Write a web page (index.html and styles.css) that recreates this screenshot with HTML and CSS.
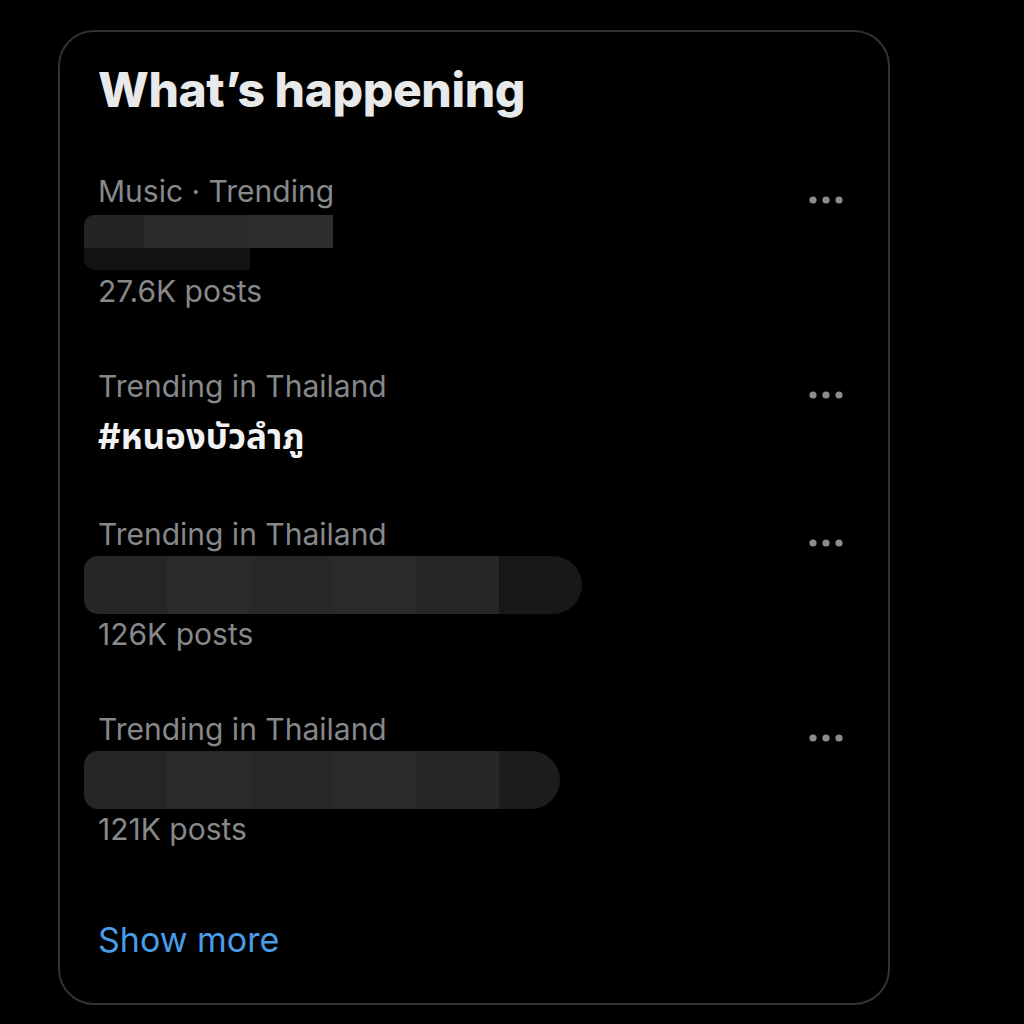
FILE: index.html
```html
<!DOCTYPE html>
<html lang="en">
<head>
  <meta charset="UTF-8">
  <meta name="viewport" content="width=device-width, initial-scale=1.0">
  <title>What's happening</title>
  <link rel="stylesheet" href="styles.css">
</head>
<body>
  <div class="card">
    <h2 class="card-title">What’s happening</h2>

    <div class="trend">
      <div class="trend-body">
        <div class="trend-meta">Music · Trending</div>
        <div class="redacted redacted-short">
          <span class="r-top"></span>
          <span class="r-bottom"></span>
        </div>
        <div class="trend-count">27.6K posts</div>
      </div>
      <svg class="more" viewBox="0 0 36 12" width="36" height="12">
        <circle cx="5" cy="6" r="3.6"/><circle cx="18" cy="6" r="3.6"/><circle cx="31" cy="6" r="3.6"/>
      </svg>
    </div>

    <div class="trend">
      <div class="trend-body">
        <div class="trend-meta">Trending in Thailand</div>
        <div class="trend-name">#หนองบัวลำภู</div>
      </div>
      <svg class="more" viewBox="0 0 36 12" width="36" height="12">
        <circle cx="5" cy="6" r="3.6"/><circle cx="18" cy="6" r="3.6"/><circle cx="31" cy="6" r="3.6"/>
      </svg>
    </div>

    <div class="trend">
      <div class="trend-body">
        <div class="trend-meta">Trending in Thailand</div>
        <div class="redacted redacted-long">
          <span></span><span></span><span></span><span></span><span></span><span class="r-end"></span>
        </div>
        <div class="trend-count">126K posts</div>
      </div>
      <svg class="more" viewBox="0 0 36 12" width="36" height="12">
        <circle cx="5" cy="6" r="3.6"/><circle cx="18" cy="6" r="3.6"/><circle cx="31" cy="6" r="3.6"/>
      </svg>
    </div>

    <div class="trend">
      <div class="trend-body">
        <div class="trend-meta">Trending in Thailand</div>
        <div class="redacted redacted-mid">
          <span></span><span></span><span></span><span></span><span></span><span class="r-end"></span>
        </div>
        <div class="trend-count">121K posts</div>
      </div>
      <svg class="more" viewBox="0 0 36 12" width="36" height="12">
        <circle cx="5" cy="6" r="3.6"/><circle cx="18" cy="6" r="3.6"/><circle cx="31" cy="6" r="3.6"/>
      </svg>
    </div>

    <a class="show-more" href="#">Show more</a>
  </div>
</body>
</html>
```

FILE: styles.css
```css
body {
  margin: 0;
  background-color: #000;
  font-family: Inter, "Noto Sans", "Noto Sans Thai", sans-serif;
  color: #e7e9ea;
}
.card {
  box-sizing: border-box;
  width: 832px;
  margin: 30px 0 0 58px;
  border: 2px solid #2f3336;
  border-radius: 36px;
  display: flex;
  flex-direction: column;
}
.card-title {
  margin: 0;
  padding: 32px 38px 27px;
  font-size: 48px;
  line-height: 52px;
  font-weight: 800;
  letter-spacing: -0.4px;
  color: #e7e9ea;
}
.trend {
  display: flex;
  justify-content: space-between;
  align-items: flex-start;
  padding: 24px 44px 23px 38px;
}
.trend-body {
  display: flex;
  flex-direction: column;
}
.trend-meta,
.trend-count {
  font-size: 30px;
  line-height: 48px;
  color: #86888a;
}
.trend-name {
  font-size: 35px;
  line-height: 53px;
  font-weight: 700;
  color: #f2f2f2;
}
.more {
  fill: #8a8c8e;
  margin-top: 27px;
}
.redacted {
  display: flex;
}
.redacted-short {
  flex-direction: column;
  height: 55px;
  margin: 0 0 -3px -14px;
}
.redacted-short .r-top {
  width: 249px;
  height: 33px;
  background: linear-gradient(90deg, #242424 0 24%, #2a2a2a 24% 66%, #2e2e2e 66% 100%);
  border-radius: 10px 0 0 0;
}
.redacted-short .r-bottom {
  width: 166px;
  height: 22px;
  background-color: #121212;
  border-radius: 0 0 0 10px;
}
.redacted-long,
.redacted-mid {
  height: 58px;
  margin: -2px 0 -4px -14px;
}
.redacted-long span,
.redacted-mid span {
  width: 83px;
  height: 100%;
}
.redacted-long span:nth-child(1),
.redacted-mid span:nth-child(1) {
  background-color: #262626;
  border-radius: 14px 0 0 14px;
}
.redacted-long span:nth-child(2),
.redacted-mid span:nth-child(2) {
  background-color: #2b2b2b;
}
.redacted-long span:nth-child(3),
.redacted-mid span:nth-child(3) {
  background-color: #282828;
}
.redacted-long span:nth-child(4),
.redacted-mid span:nth-child(4) {
  background-color: #2a2a2a;
}
.redacted-long span:nth-child(5),
.redacted-mid span:nth-child(5) {
  background-color: #272727;
}
.redacted-long .r-end {
  background-color: #181818;
  border-radius: 0 29px 29px 0;
}
.redacted-mid .r-end {
  width: 61px;
  background-color: #1c1c1c;
  border-radius: 0 29px 29px 0;
}
.show-more {
  padding: 40px 38px 39px;
  font-size: 34px;
  line-height: 48px;
  color: #4a9ce6;
  text-decoration: none;
}
```
